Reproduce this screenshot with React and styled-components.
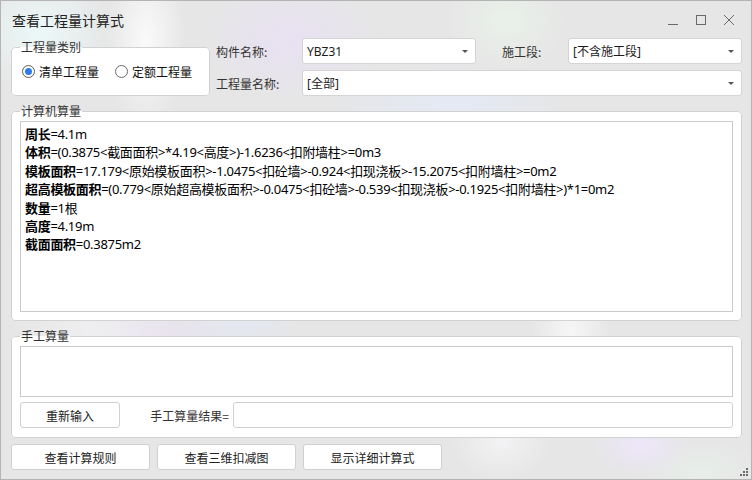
import React from "react";
import styled, { createGlobalStyle } from "styled-components";

const Global = createGlobalStyle`
  html, body { margin: 0; padding: 0; }
  body { width: 752px; height: 480px; overflow: hidden; }
  * { box-sizing: border-box; }
`;

const FONT = `"Noto Sans", "Noto Sans CJK SC", sans-serif`;

const Window = styled.div`
  width: 752px;
  height: 480px;
  border: 1px solid #b4b4b4;
  display: flex;
  flex-direction: column;
  font-family: ${FONT};
  font-size: 12px;
  color: #333;
  background:
    radial-gradient(ellipse 70px 60px at 40px 30px, rgba(236,250,250,0.9), transparent),
    radial-gradient(ellipse 40px 90px at 145px 40px, rgba(255,255,255,0.8), transparent),
    radial-gradient(ellipse 90px 60px at 290px 40px, rgba(232,224,244,0.9), transparent),
    radial-gradient(ellipse 120px 40px at 450px 102px, rgba(228,234,248,0.9), transparent),
    radial-gradient(ellipse 60px 50px at 505px 20px, rgba(234,242,234,0.9), transparent),
    radial-gradient(ellipse 80px 60px at 90px 330px, rgba(240,240,242,0.9), transparent),
    radial-gradient(ellipse 80px 40px at 150px 330px, rgba(234,226,244,0.8), transparent),
    radial-gradient(ellipse 60px 30px at 240px 320px, rgba(228,232,246,0.8), transparent),
    radial-gradient(ellipse 40px 60px at 570px 330px, rgba(248,248,248,0.9), transparent),
    radial-gradient(ellipse 50px 30px at 640px 445px, rgba(238,230,252,0.9), transparent),
    radial-gradient(ellipse 60px 30px at 700px 470px, rgba(232,240,234,0.8), transparent),
    radial-gradient(ellipse 50px 40px at 500px 440px, rgba(244,244,246,0.9), transparent),
    #e6e6e6;
`;

const TitleBar = styled.div`
  height: 37px;
  flex: none;
  display: flex;
  align-items: center;
  padding-left: 11px;
  padding-top: 1px;
`;

const Title = styled.div`
  font-size: 14px;
  color: #222;
  flex: 1;
  font-family: "Noto Sans CJK SC", sans-serif;
`;

const Controls = styled.div`
  display: flex;
  align-items: center;
  margin-right: 8px;
`;

const CtlBtn = styled.div`
  width: 28px;
  height: 20px;
  display: flex;
  align-items: center;
  justify-content: center;
`;

const Content = styled.div`
  flex: 1;
  display: flex;
  flex-direction: column;
  padding: 0 9px 9px 10px;
`;

const TopRow = styled.div`
  display: flex;
  gap: 6px;
  height: 58px;
`;

const Group = styled.fieldset`
  margin: ${(p) => p.$mt || 0}px 0 0 0;
  padding: ${(p) => p.$pad};
  border: 1px solid #d2d2d2;
  border-radius: 4px;
  background: #fff;
  min-width: 0;
  width: ${(p) => (p.$w ? p.$w + "px" : "auto")};
  flex: none;
`;

const Legend = styled.legend`
  padding: 0 1px;
  margin-left: 0;
  font-size: 12px;
  line-height: 16px;
  color: #333;
  font-family: "Noto Sans CJK SC", sans-serif;
`;

const RadioRow = styled.div`
  display: flex;
  align-items: center;
  height: 16px;
  padding-left: 2px;
`;

const RadioItem = styled.label`
  display: flex;
  align-items: center;
  margin-right: ${(p) => p.$mr || 0}px;
  font-size: 12px;
  color: #111;
  font-family: "Noto Sans CJK SC", sans-serif;
`;

const RadioCircle = styled.span`
  width: 13px;
  height: 13px;
  border-radius: 50%;
  border: 1px solid ${(p) => (p.$on ? "#5b5b5b" : "#6a6a6a")};
  background: #fff;
  display: flex;
  align-items: center;
  justify-content: center;
  margin-right: 4px;
  &::after {
    content: "";
    width: 7px;
    height: 7px;
    border-radius: 50%;
    background: ${(p) => (p.$on ? "#2f7be5" : "transparent")};
  }
`;

const FormGrid = styled.div`
  display: grid;
  grid-template-columns: 86px 174px 26px 66px 174px;
  grid-template-rows: 26px 26px;
  row-gap: 6px;
  align-items: center;
`;

const FieldLabel = styled.div`
  font-size: 12px;
  color: #333;
  font-family: "Noto Sans CJK SC", sans-serif;
`;

const Combo = styled.div`
  grid-column: ${(p) => p.$col || "auto"};
  height: 26px;
  background: #fff;
  border: 1px solid #d4d4d4;
  border-radius: 3px;
  display: flex;
  align-items: center;
  padding: 0 7px 0 4px;
  font-size: 12px;
  color: #1a1a1a;
`;

const ComboText = styled.span`
  flex: 1;
`;

const Arrow = styled.span`
  width: 0;
  height: 0;
  border-left: 3px solid transparent;
  border-right: 3px solid transparent;
  border-top: 3px solid #555;
`;

const TextBox = styled.div`
  height: ${(p) => p.$h}px;
  background: #fff;
  border: 1px solid #cacaca;
  padding: 3px 4px;
  font-size: 13px;
  line-height: 17.4px;
  letter-spacing: -0.3px;
  color: #000;
  font-family: "Noto Sans", "Noto Sans CJK SC", sans-serif;
`;

const Line = styled.div`
  white-space: nowrap;
`;

const Key = styled.b`
  font-weight: 700;
  font-family: "Noto Sans CJK SC", sans-serif;
`;

const InputRow = styled.div`
  display: flex;
  align-items: center;
  margin-top: 5px;
  height: 26px;
`;

const Button = styled.div`
  width: ${(p) => p.$w}px;
  height: 26px;
  background: #fff;
  border: 1px solid #d0d0d0;
  border-radius: 3px;
  display: flex;
  align-items: center;
  justify-content: center;
  font-size: 12px;
  color: #222;
  flex: none;
  font-family: "Noto Sans CJK SC", sans-serif;
`;

const ResultLabel = styled.div`
  width: 113px;
  text-align: right;
  padding-right: 4px;
  font-size: 12px;
  color: #333;
  font-family: "Noto Sans CJK SC", sans-serif;
`;

const Input = styled.div`
  flex: 1;
  height: 26px;
  background: #fff;
  border: 1px solid #d0d0d0;
  border-radius: 3px;
`;

const BottomRow = styled.div`
  display: flex;
  gap: 7px;
  margin-top: 6px;
  align-items: flex-end;
  flex: 1;
`;

const Spacer = styled.div`
  flex: 1;
`;

const Grip = styled.svg`
  display: block;
  margin: 0 -7px -7px 0;
`;

const formulas = [
  ["周长", "=4.1m"],
  ["体积", "=(0.3875<截面面积>*4.19<高度>)-1.6236<扣附墙柱>=0m3"],
  ["模板面积", "=17.179<原始模板面积>-1.0475<扣砼墙>-0.924<扣现浇板>-15.2075<扣附墙柱>=0m2"],
  ["超高模板面积", "=(0.779<原始超高模板面积>-0.0475<扣砼墙>-0.539<扣现浇板>-0.1925<扣附墙柱>)*1=0m2"],
  ["数量", "=1根"],
  ["高度", "=4.19m"],
  ["截面面积", "=0.3875m2"],
];

export default function App() {
  return (
    <>
      <Global />
      <Window>
        <TitleBar>
          <Title>查看工程量计算式</Title>
          <Controls>
            <CtlBtn>
              <svg width="12" height="12" viewBox="0 0 12 12">
                <path d="M1 10.5H11" stroke="#6a6a6a" strokeWidth="1" />
              </svg>
            </CtlBtn>
            <CtlBtn>
              <svg width="12" height="12" viewBox="0 0 12 12">
                <rect x="1.5" y="1.5" width="9" height="9" fill="none" stroke="#6a6a6a" strokeWidth="1" />
              </svg>
            </CtlBtn>
            <CtlBtn>
              <svg width="12" height="12" viewBox="0 0 12 12">
                <path d="M1 1L11 11M11 1L1 11" stroke="#6a6a6a" strokeWidth="1" />
              </svg>
            </CtlBtn>
          </Controls>
        </TitleBar>
        <Content>
          <TopRow>
            <Group $w={199} $mt={1} $pad="8px 8px 15px 8px">
              <Legend>工程量类别</Legend>
              <RadioRow>
                <RadioItem $mr={16}>
                  <RadioCircle $on />
                  清单工程量
                </RadioItem>
                <RadioItem>
                  <RadioCircle />
                  定额工程量
                </RadioItem>
              </RadioRow>
            </Group>
            <FormGrid>
              <FieldLabel>构件名称:</FieldLabel>
              <Combo>
                <ComboText>YBZ31</ComboText>
                <Arrow />
              </Combo>
              <span />
              <FieldLabel>施工段:</FieldLabel>
              <Combo>
                <ComboText>[不含施工段]</ComboText>
                <Arrow />
              </Combo>
              <FieldLabel>工程量名称:</FieldLabel>
              <Combo $col="2 / 6">
                <ComboText>[全部]</ComboText>
                <Arrow />
              </Combo>
            </FormGrid>
          </TopRow>
          <Group $mt={7} $pad="2px 8px 8px 8px">
            <Legend>计算机算量</Legend>
            <TextBox $h={191}>
              {formulas.map(([k, v]) => (
                <Line key={k}>
                  <Key>{k}</Key>
                  {v}
                </Line>
              ))}
            </TextBox>
          </Group>
          <Group $mt={7} $pad="2px 8px 9px 8px">
            <Legend>手工算量</Legend>
            <TextBox $h={51} />
            <InputRow>
              <Button $w={100}>重新输入</Button>
              <ResultLabel>手工算量结果=</ResultLabel>
              <Input />
            </InputRow>
          </Group>
          <BottomRow>
            <Button $w={139}>查看计算规则</Button>
            <Button $w={139}>查看三维扣减图</Button>
            <Button $w={139}>显示详细计算式</Button>
            <Spacer />
            <Grip width="10" height="10" viewBox="0 0 10 10">
              <g fill="#6b6b6b">
                <rect x="7" y="1" width="2" height="2" />
                <rect x="4" y="4" width="2" height="2" />
                <rect x="7" y="4" width="2" height="2" />
                <rect x="1" y="7" width="2" height="2" />
                <rect x="4" y="7" width="2" height="2" />
                <rect x="7" y="7" width="2" height="2" />
              </g>
            </Grip>
          </BottomRow>
        </Content>
      </Window>
    </>
  );
}
